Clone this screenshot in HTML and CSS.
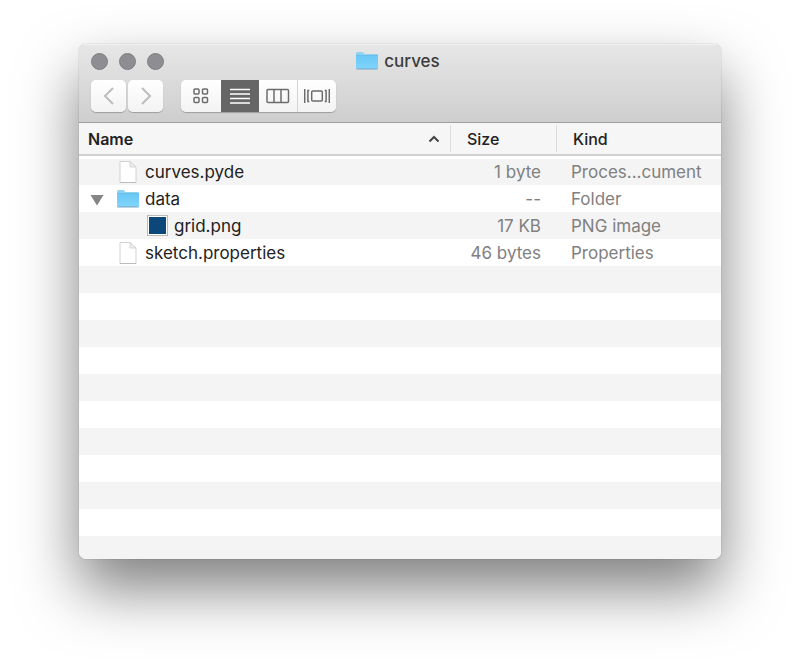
FILE: index.html
```html
<!DOCTYPE html>
<html lang="en">

<head>
    <meta charset="UTF-8">
    <meta name="viewport" content="width=device-width, initial-scale=1.0">
    <title>curves</title>
    <link rel="stylesheet" href="styles.css">
</head>

<body>
    <svg class="sprite" width="0" height="0" aria-hidden="true">
        <linearGradient id="folder-fill" x1="0" y1="0" x2="0" y2="1">
            <stop offset="0" stop-color="#6cc9f6" />
            <stop offset="1" stop-color="#7fd4fb" />
        </linearGradient>
        <symbol id="folder" viewBox="0 0 22 18">
            <path d="M0 16V1.500Q0 0 1.500 0H6.500L8.500 2H20.500Q22 2 22 3.500V16Z" fill="#8fd3f3" />
            <path d="M0 4H22V16Q22 17 21 17H1Q0 17 0 16Z" fill="url(#folder-fill)" />
            <path d="M0 3.500H22" stroke="#62b9e6" stroke-width="0.800" />
            <path d="M0.500 17H21.500" stroke="#7da5bf" />
        </symbol>
        <symbol id="file" viewBox="0 0 18 22">
            <path d="M1 0.500H11L17 6.500V21.500H1Z" fill="#fff" stroke="#d2d2d2" />
            <path d="M1 21.500H17" stroke="#bcbcbc" />
            <path d="M11 0.500V6H17Z" fill="#eee" stroke="#cdcdcd" stroke-width="0.800" />
        </symbol>
    </svg>

    <main class="window">
        <header class="window-header">
            <div class="title-bar">
                <div class="lights">
                    <button class="light" type="button" aria-label="Close"></button>
                    <button class="light" type="button" aria-label="Minimize"></button>
                    <button class="light" type="button" aria-label="Zoom"></button>
                </div>
                <h1 class="title">
                    <svg class="icon-folder"><use href="#folder" /></svg>
                    curves
                </h1>
            </div>
            <div class="toolbar">
                <div class="nav">
                    <button class="nav-button" type="button" aria-label="Back">
                        <svg width="12" height="18" viewBox="0 0 12 18"><path d="M10 1L2 9L10 17" /></svg>
                    </button>
                    <button class="nav-button" type="button" aria-label="Forward">
                        <svg width="12" height="18" viewBox="0 0 12 18"><path d="M2 1L10 9L2 17" /></svg>
                    </button>
                </div>
                <div class="views">
                    <button class="view-button" type="button" aria-label="Icons">
                        <svg width="16" height="16" viewBox="0 0 16 16">
                            <rect x="1" y="1" width="5" height="5" rx="1" />
                            <rect x="9.500" y="1" width="5" height="5" rx="1" />
                            <rect x="1" y="9.500" width="5" height="5" rx="1" />
                            <rect x="9.500" y="9.500" width="5" height="5" rx="1" />
                        </svg>
                    </button>
                    <button class="view-button active" type="button" aria-label="List" aria-pressed="true">
                        <svg width="20" height="16" viewBox="0 0 20 16">
                            <path d="M0 1.500H20M0 6H20M0 10.500H20M0 15H20" />
                        </svg>
                    </button>
                    <button class="view-button" type="button" aria-label="Columns">
                        <svg width="24" height="16" viewBox="0 0 24 16">
                            <rect x="1" y="1.500" width="21.500" height="13" rx="1" />
                            <path d="M8 1.500V14.500M15 1.500V14.500" />
                        </svg>
                    </button>
                    <button class="view-button" type="button" aria-label="Cover Flow">
                        <svg width="26" height="16" viewBox="0 0 26 16">
                            <rect x="7.700" y="3" width="10.600" height="10" rx="1" />
                            <path d="M0.700 1V15M25.300 1V15M5.300 2.500H3.900V13.500H5.300M20.700 2.500H22.100V13.500H20.700" />
                        </svg>
                    </button>
                </div>
            </div>
        </header>

        <div class="list">
            <table class="files">
                <colgroup>
                    <col>
                    <col class="col-size">
                    <col class="col-kind">
                </colgroup>
                <thead>
                    <tr>
                        <th class="sorted" aria-sort="ascending">
                            <div class="heading">
                                Name
                                <svg width="12" height="8" viewBox="0 0 12 8"><path d="M1.500 6.500L6 2L10.500 6.500" /></svg>
                            </div>
                        </th>
                        <th><div class="heading">Size</div></th>
                        <th><div class="heading">Kind</div></th>
                    </tr>
                </thead>
                <tbody>
                    <tr>
                        <td>
                            <div class="name">
                                <span class="thumb"><svg class="icon-file"><use href="#file" /></svg></span>
                                curves.pyde
                            </div>
                        </td>
                        <td class="size">1 byte</td>
                        <td class="kind">Proces...cument</td>
                    </tr>
                    <tr>
                        <td>
                            <div class="name folder">
                                <button class="toggle" type="button" aria-label="Collapse data" aria-expanded="true">
                                    <svg width="14" height="12" viewBox="0 0 14 12"><path d="M0.500 1H13.500L7 11.500Z" /></svg>
                                </button>
                                <span class="thumb"><svg class="icon-folder"><use href="#folder" /></svg></span>
                                data
                            </div>
                        </td>
                        <td class="size">--</td>
                        <td class="kind">Folder</td>
                    </tr>
                    <tr>
                        <td>
                            <div class="name nested">
                                <span class="thumb"><span class="preview"></span></span>
                                grid.png
                            </div>
                        </td>
                        <td class="size">17 KB</td>
                        <td class="kind">PNG image</td>
                    </tr>
                    <tr>
                        <td>
                            <div class="name">
                                <span class="thumb"><svg class="icon-file"><use href="#file" /></svg></span>
                                sketch.properties
                            </div>
                        </td>
                        <td class="size">46 bytes</td>
                        <td class="kind">Properties</td>
                    </tr>
                </tbody>
            </table>
        </div>
    </main>
</body>

</html>
```
FILE: styles.css
```css
* {
    box-sizing: border-box;
}

body {
    display: flex;
    min-height: 100vh;
    margin: 0;
    padding: 44px 79px 105px;
    background-color: #fff;
    color: #222;
    font-family: Inter, "Liberation Sans", sans-serif;
    font-size: 17px;
}

button {
    padding: 0;
    border: 0;
    background: none;
}

svg {
    display: block;
    fill: none;
}

.sprite {
    position: absolute;
}

.window {
    display: flex;
    flex: 1;
    flex-direction: column;
    min-width: 0;
    overflow: hidden;
    border-radius: 7px;
    box-shadow: 0 0 1px rgba(0, 0, 0, 0.5), 0 30px 60px rgba(0, 0, 0, 0.5);
}

/* Title bar and toolbar */
.window-header {
    padding: 0 12px 10px;
    border-bottom: 1px solid #a0a0a0;
    background: linear-gradient(#e7e7e7, #cecece);
    box-shadow: inset 0 1px #f0f0f0;
}

.title-bar {
    display: grid;
    grid-template-columns: 1fr auto 1fr;
    align-items: center;
    height: 36px;
    padding-bottom: 2px;
}

.lights {
    display: flex;
    gap: 11px;
}

.light {
    width: 17px;
    height: 17px;
    border: 1px solid #7f7f82;
    border-radius: 50%;
    background-color: #8e8e92;
}

.title {
    display: flex;
    align-items: center;
    gap: 6px;
    margin: 0;
    padding-right: 4px;
    color: #3c3c3c;
    font-size: 17px;
    font-weight: 500;
}

.icon-folder {
    width: 22px;
    height: 18px;
}

.icon-file {
    width: 18px;
    height: 22px;
}

.toolbar {
    display: flex;
    gap: 18px;
}

.nav {
    display: flex;
    gap: 2px;
}

.nav-button,
.view-button {
    display: flex;
    align-items: center;
    justify-content: center;
    height: 32px;
    background: linear-gradient(#fff, #f3f3f3);
}

.nav-button {
    width: 35px;
    border-radius: 5px;
    box-shadow: 0 1px 1px rgba(0, 0, 0, 0.25);
}

.nav-button path {
    stroke: #bdbdbd;
    stroke-width: 2;
}

.views {
    display: flex;
    border-radius: 5px;
    box-shadow: 0 1px 1px rgba(0, 0, 0, 0.25);
}

.view-button {
    width: 38px;
    stroke: #6c6c6c;
    stroke-width: 1.5;
}

.view-button:first-child {
    width: 40px;
    border-radius: 5px 0 0 5px;
}

.view-button:last-child {
    width: 39px;
    border-left: 1px solid #d4d4d4;
    border-radius: 0 5px 5px 0;
}

.view-button.active {
    background: #666;
    stroke: #fff;
}

/* File list */
.list {
    flex: 1;
    background:
        linear-gradient(#fff, #fff) 0 0 / 100% 36px no-repeat,
        repeating-linear-gradient(#f4f4f4 0 27px, #fff 27px 54px) 0 35px;
}

.files {
    width: 100%;
    border-collapse: separate;
    border-spacing: 0;
    table-layout: fixed;
}

.col-size {
    width: 106px;
}

.col-kind {
    width: 165px;
}

th {
    height: 33px;
    padding: 2px 0;
    border-bottom: 2px solid #d0d0d0;
    background-color: #f6f6f6;
    font-size: 16px;
    font-weight: 500;
    text-align: left;
}

th.sorted {
    font-weight: 600;
}

.heading {
    display: flex;
    align-items: center;
    justify-content: space-between;
    height: 27px;
    padding: 0 10px 0 16px;
    border-left: 1px solid #dcdcdc;
}

.sorted .heading {
    padding-left: 9px;
    border-left: 0;
}

.heading path {
    stroke: #444;
    stroke-width: 2;
}

tbody::before {
    content: "";
    display: table-row;
    height: 2px;
}

td {
    height: 27px;
    padding: 2px 0 0;
    line-height: 25px;
    white-space: nowrap;
}

.name {
    display: flex;
    align-items: center;
    height: 25px;
    padding-left: 38px;
}

.name.folder {
    padding-left: 11px;
}

.name.nested {
    padding-left: 67px;
}

.toggle {
    width: 27px;
}

.toggle path {
    fill: #858585;
}

.thumb {
    display: flex;
    justify-content: center;
    width: 22px;
    margin: 0 6px 2px 0;
}

.preview {
    width: 21px;
    height: 21px;
    border: 2px solid #fff;
    outline: 1px solid #bbb;
    outline-offset: -1px;
    background-color: #0b4778;
}

.size {
    padding-right: 15px;
    color: #808080;
    text-align: right;
}

.kind {
    padding-left: 15px;
    color: #808080;
}
```
